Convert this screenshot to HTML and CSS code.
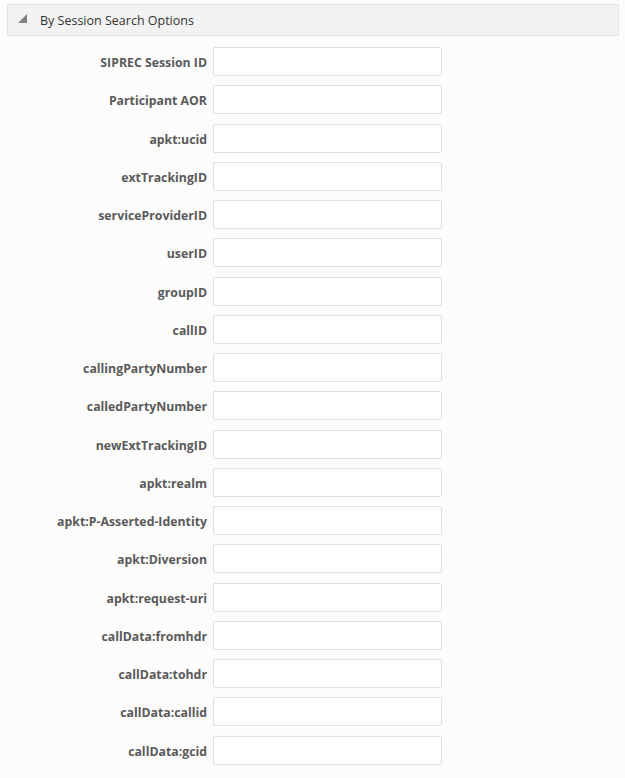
FILE: index.html
```html
<!DOCTYPE html>
<html lang="en">
<head>
    <meta charset="UTF-8">
    <title>By Session Search Options</title>
    <link rel="stylesheet" href="styles.css">
</head>
<body>
    <div class="panel">
        <div class="panel-header">
            <svg class="disclosure" width="10" height="10" viewBox="0 0 10 10"><polygon points="9,0 9,9 0,9" fill="#808080"/></svg>
            <span>By Session Search Options</span>
        </div>
        <div class="form">
            <label for="f1">SIPREC Session ID</label><input type="text" id="f1">
            <label for="f2">Participant AOR</label><input type="text" id="f2">
            <label for="f3">apkt:ucid</label><input type="text" id="f3">
            <label for="f4">extTrackingID</label><input type="text" id="f4">
            <label for="f5">serviceProviderID</label><input type="text" id="f5">
            <label for="f6">userID</label><input type="text" id="f6">
            <label for="f7">groupID</label><input type="text" id="f7">
            <label for="f8">callID</label><input type="text" id="f8">
            <label for="f9">callingPartyNumber</label><input type="text" id="f9">
            <label for="f10">calledPartyNumber</label><input type="text" id="f10">
            <label for="f11">newExtTrackingID</label><input type="text" id="f11">
            <label for="f12">apkt:realm</label><input type="text" id="f12">
            <label for="f13">apkt:P-Asserted-Identity</label><input type="text" id="f13">
            <label for="f14">apkt:Diversion</label><input type="text" id="f14">
            <label for="f15">apkt:request-uri</label><input type="text" id="f15">
            <label for="f16">callData:fromhdr</label><input type="text" id="f16">
            <label for="f17">callData:tohdr</label><input type="text" id="f17">
            <label for="f18">callData:callid</label><input type="text" id="f18">
            <label for="f19">callData:gcid</label><input type="text" id="f19">
        </div>
    </div>
</body>
</html>
```

FILE: styles.css
```css
body {
    margin: 0;
    padding: 4px 6px 0 7px;
    background: #fcfcfc;
    font-family: 'Open Sans', 'Noto Sans', sans-serif;
    color: #333;
}

.panel-header {
    display: flex;
    align-items: center;
    height: 30px;
    border: 1px solid #e3e3e3;
    background: #f2f2f2;
    padding-left: 10px;
    font-size: 12.5px;
    color: #333;
}

.disclosure {
    margin-right: 12px;
    margin-top: -2px;
}

.form {
    display: grid;
    grid-template-columns: 200px 229px;
    column-gap: 6px;
    row-gap: 9.25px;
    margin-top: 11px;
    align-items: center;
}

label {
    text-align: right;
    font-weight: bold;
    font-size: 12.3px;
    color: #5a5a5a;
    white-space: nowrap;
    padding-top: 2px;
}

input {
    box-sizing: border-box;
    height: 29px;
    width: 229px;
    margin: 0;
    border: 1px solid #dfdfdf;
    border-radius: 2px;
    background: #fff;
}
```
